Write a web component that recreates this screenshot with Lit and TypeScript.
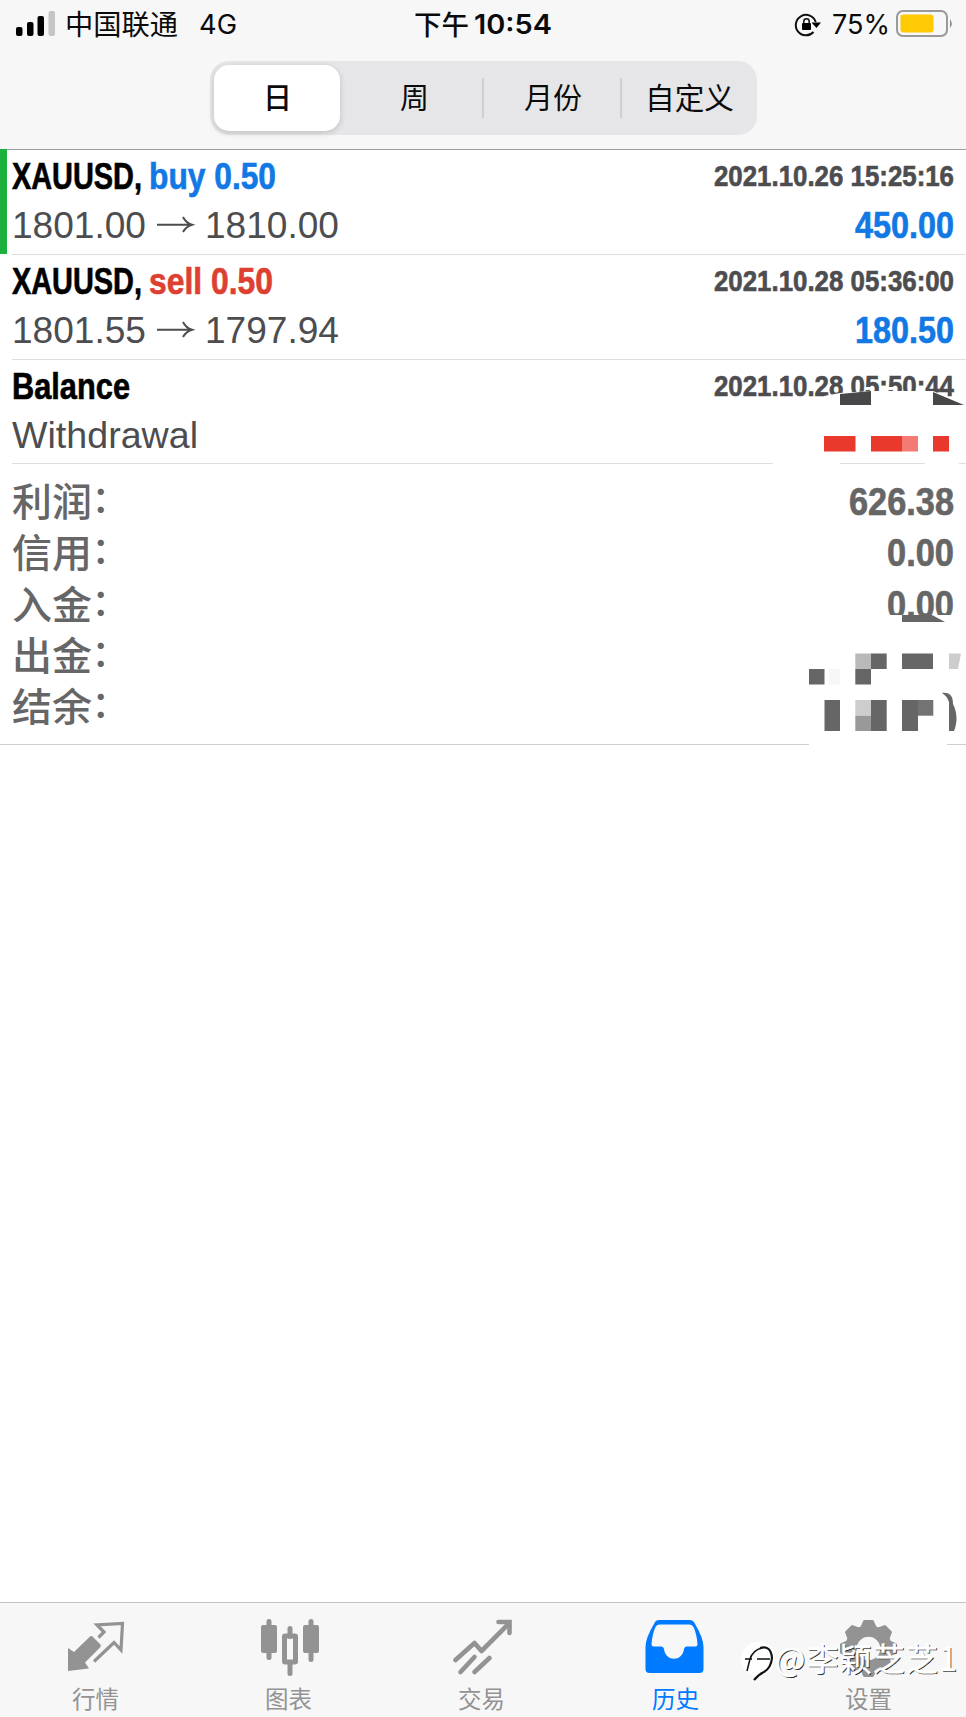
import { LitElement, html, svg, css } from "lit";
import { customElement } from "lit/decorators.js";

// Text line set to a fixed advance width; `tall` stretches the glyphs vertically.
const line = (
  text: string,
  cls: string,
  width: number,
  height: number,
  baseline: number,
  size: number,
  tall = 1
) => html`<svg class="line ${cls}" width=${width} height=${height}>
  <text x="0" y=${baseline / tall} transform="scale(1 ${tall})" font-size=${size / tall} textLength=${width} lengthAdjust="spacingAndGlyphs">${text}</text>
</svg>`;

const narrow = (text: string, cls: string, width: number, baseline: number, size: number) =>
  line(text, "bold " + cls, width, 50, baseline, size, 1.29);

const icons: Record<string, unknown> = {
  quotes: svg`<path d="M5 28 L11 32 L27 16.500 Q28.500 15.500 30 17 L37.500 24.500 Q38.500 26 37 27.500 L22 42.500 L26 48.500 L5 51Z" fill="currentColor"/>
    <path d="M35.500 17.500 L41 12 L34 5 L59.500 3.500 L58 30 L51 22.500 L31 41.500" fill="none" stroke="currentColor" stroke-width="3.200" stroke-linejoin="miter" stroke-linecap="butt"/>`,
  chart: svg`<g fill="currentColor"><rect x="5" y="5" width="16" height="28" rx="2"/><rect x="10.500" y="-1" width="5" height="41" rx="2.500"/>
    <rect x="47" y="5" width="16" height="28" rx="2"/><rect x="52.500" y="-1" width="5" height="43" rx="2.500"/>
    <rect x="31.500" y="6" width="5" height="13" rx="2.500"/><rect x="31.500" y="41" width="5" height="15" rx="2.500"/></g>
    <rect x="28.500" y="16" width="11" height="26" rx=".5" fill="none" stroke="currentColor" stroke-width="5"/>`,
  trade: svg`<g fill="none" stroke="currentColor" stroke-width="4.600" stroke-linecap="round" stroke-linejoin="round" transform="translate(-2.500 0)">
    <path d="M9 40 L28 23 L35 31 L62 4"/><path d="M52 2 H63 V13" stroke-linejoin="miter"/><path d="M28 37 L14 52 M43 38 L28 52"/></g>`,
  history: svg`<path transform="translate(-1.500 0)" fill-rule="evenodd" fill="currentColor" d="M15 0 H49 Q52.500 0 54 3 Q63 18 63 27 V49 Q63 53 59 53 H9 Q5 53 5 49 V27 Q5 18 14 3 Q15 0 19 0Z M19 4.500 Q16 4.500 15 7 Q12 13 11 24 Q11 26.500 13 26.500 H21 Q23 26.500 23.500 29 C25 42 42 42 43.500 29 Q44 26.500 46 26.500 H55 Q57 26.500 57 24 Q56 13 53 7 Q52 4.500 49 4.500Z"/>`,
  settings: svg`<g transform="translate(-.500 .500)"><g fill="none" stroke="currentColor" stroke-width="11.500"><circle cx="34" cy="28" r="17.500"/></g>
    <g fill="currentColor" stroke="currentColor" stroke-width="3" stroke-linejoin="round">
    ${[0, 45, 90, 135, 180, 225, 270, 315].map((a) => svg`<path transform="rotate(${a} 34 28)" d="M26.500 9 L30 1 H38 L41.500 9Z"/>`)}</g></g>`,
};

@customElement("app-root")
export class AppRoot extends LitElement {
  static styles = css`
    :host {
      display: flex;
      flex-direction: column;
      position: relative;
      width: 966px;
      height: 1717px;
      overflow: hidden;
      background: #fff;
      font-family: "Liberation Sans", "Noto Sans CJK SC", sans-serif;
    }
    svg { display: block; overflow: visible; flex: none; }
    .line { fill: currentColor; white-space: pre; }
    .ui { font-family: Inter, "Noto Sans CJK SC", sans-serif; color: #0b0b0b; }
    .cjk { font-family: "Noto Sans CJK SC", sans-serif; }
    .semi { font-weight: 600; }
    .med { font-weight: 500; }
    .bold { font-weight: 700; stroke: currentColor; stroke-width: .5px; }
    header { height: 149px; background: #f7f7f7; border-bottom: 1px solid #9d9d9d; flex: none; }
    .status { display: grid; grid-template-columns: 414px 1fr auto; height: 61px; }
    .left, .mid, .right { display: flex; }
    .left { padding-left: 16px; }
    .carrier { margin-left: 9px; }
    .net { margin-left: 21px; }
    .clock { margin-left: 5px; }
    .right { padding-right: 13px; }
    .pct { margin: 0 6px 0 12px; }
    .segments {
      display: grid; grid-template-columns: 130px 139px 138px 1fr; width: 547px; height: 74px;
      margin-left: 210px; border-radius: 19px; background: #e6e6e8;
    }
    .seg { display: flex; justify-content: center; align-items: flex-start; position: relative; padding-left: 9px; }
    .seg.on { margin: 4px 0 5px 4px; padding-left: 0; background: #fff; border-radius: 15px; box-shadow: 0 2px 6px rgba(0,0,0,.16); }
    .seg.on .line { margin-top: -4px; }
    .seg.rule::before { content: ""; position: absolute; left: 3px; top: 17px; width: 1.500px; height: 40px; background: #cfcfd2; }
    .seg.rule2 { padding-left: 4px; }
    .row { display: flex; height: 105px; flex: none; padding-left: 12px; position: relative; }
    .row.last { height: 104px; }
    .row.open::before { content: ""; position: absolute; left: 0; top: -1px; width: 7px; height: 105px; background: #1cb03c; }
    .cells { flex: 1; display: grid; grid-template-rows: 50px 1fr; border-bottom: 1px solid #dedede; padding-right: 12px; }
    .pair { display: flex; justify-content: space-between; }
    .name { display: flex; gap: 7px; }
    .black { color: #000; }
    .grey { color: #4d4d50; }
    .blue { color: #1178e4; }
    .red { color: #dd4031; }
    .sum { color: #666; }
    .summary { display: grid; grid-template-rows: repeat(4, 51.300px) 1fr; height: 266px; flex: none; padding: 14px 12px 0 12px; border-bottom: 1px solid #cfcfcf; }
    .mosaic { position: absolute; left: 0; top: 0; pointer-events: none; }
    main { flex: 1; }
    footer { display: grid; grid-template-columns: repeat(5, 1fr); height: 114px; background: #f7f7f7; border-top: 1px solid #c4c4c4; flex: none; }
    .tab { display: flex; flex-direction: column; align-items: center; padding-top: 17px; color: #939393; }
    .tab.on { color: #007aff; }
    .tab .line { margin: 7px 2px 0 0; }
    .mark { position: absolute; left: 735px; top: 1628px; }
  `;

  render() {
    return html`
      <header>
        <div class="status">
          <div class="left">
            <svg width="40" height="50">
              <rect x="0" y="27" width="6.500" height="9" rx="2"/><rect x="11" y="22" width="6.500" height="14" rx="2"/>
              <rect x="21.500" y="16" width="6.500" height="20" rx="2"/><rect x="32.500" y="11" width="6.500" height="25" rx="2" fill="#c5c5c5"/>
            </svg>
            ${line("中国联通", "ui cjk carrier", 113, 50, 34.5, 28)}
            ${line("4G", "ui net", 38, 50, 34.3, 27)}
          </div>
          <div class="mid">
            ${line("下午", "ui cjk med", 55, 50, 34.5, 27.5)}
            ${line("10:54", "ui semi clock", 78, 50, 34.3, 27)}
          </div>
          <div class="right">
            <svg width="26" height="50">
              <path d="M19.500 32 A10.200 10.200 0 1 1 21.700 22" fill="none" stroke="#111" stroke-width="2"/>
              <path d="M17.500 22.500 H27 L22.500 28Z"/><rect x="8" y="23" width="9" height="7" rx="1"/>
              <path d="M9.800 23 V21.500 A2.700 2.700 0 0 1 15.200 21.500 V23" fill="none" stroke="#111" stroke-width="1.500"/>
            </svg>
            ${line("75%", "ui pct", 58, 50, 34.3, 27)}
            <svg width="57" height="50">
              <rect x="1" y="11" width="50" height="25" rx="6" fill="none" stroke="#999" stroke-width="2"/>
              <rect x="4.500" y="14.500" width="33" height="18" rx="3" fill="#fdca04"/>
              <path d="M54 19 Q57.500 23.500 54 28Z" fill="#8a8a8a"/>
            </svg>
          </div>
        </div>
        <div class="segments">
          <div class="seg on">${line("日", "ui cjk med", 29, 70, 48, 29)}</div>
          <div class="seg">${line("周", "ui cjk", 29, 70, 48, 29)}</div>
          <div class="seg rule">${line("月份", "ui cjk", 58, 70, 48, 29)}</div>
          <div class="seg rule rule2">${line("自定义", "ui cjk", 89, 70, 48, 29.5)}</div>
        </div>
      </header>

      <section class="row open"><div class="cells">
        <div class="pair">
          <div class="name">${narrow("XAUUSD,", "black", 130, 39.3, 37)}${narrow("buy 0.50", "blue", 127, 39.3, 37)}</div>
          ${narrow("2021.10.26 15:25:16", "grey", 240, 35.7, 29.5)}
        </div>
        <div class="pair">${this.price("1801.00", "1810.00")}${narrow("450.00", "blue", 99, 38, 37)}</div>
      </div></section>
      <section class="row"><div class="cells">
        <div class="pair">
          <div class="name">${narrow("XAUUSD,", "black", 130, 39, 37)}${narrow("sell 0.50", "red", 124, 39, 37)}</div>
          ${narrow("2021.10.28 05:36:00", "grey", 240, 35.7, 29.5)}
        </div>
        <div class="pair">${this.price("1801.55", "1797.94")}${narrow("180.50", "blue", 99, 38, 37)}</div>
      </div></section>
      <section class="row last"><div class="cells">
        <div class="pair">
          ${narrow("Balance", "black", 118, 39, 37)}
          ${narrow("2021.10.28 05:50:44", "grey", 240, 35.7, 29.5)}
        </div>
        <div class="pair">${line("Withdrawal", "grey", 186, 50, 37.7, 37)}</div>
      </div></section>

      <section class="summary">
        ${[["利润", "626.38", 105], ["信用", "0.00", 67], ["入金", "0.00", 67], ["出金", "", 0], ["结余", "", 0]].map(
          ([label, value, w]) => html`<div class="pair">
            <svg class="line cjk med sum" width="100" height="50">
              <text x="0" y="38" font-size="39" textLength="80" lengthAdjust="spacingAndGlyphs">${label}</text>
              <text x="79.500" y="34.500" font-size="37">：</text>
            </svg>
            ${value ? narrow(value as string, "sum", w as number, 37.5, 38) : null}
          </div>`
        )}
      </section>

      <svg class="mosaic" width="966" height="760">
        <g fill="#fff">
          <path d="M824 396 L840 393 L871 391 H933 L966 405 V420 H824Z"/>
          <rect x="773" y="455" width="67" height="12"/><rect x="925" y="455" width="34" height="12"/>
          <path d="M886 615 H960 V640 H886Z"/><rect x="809" y="735" width="138" height="14"/>
        </g>
        <g fill="#48484b"><path d="M840 394 L871 391 V405 H840Z"/><path d="M933 392 L964 405 H933Z"/></g>
        <g fill="#e8392c"><rect x="824" y="436" width="31.500" height="15.500"/><rect x="871" y="436" width="31" height="15.500"/><rect x="933" y="436" width="16" height="15.500"/></g>
        <rect x="902" y="436" width="16" height="15.500" fill="#f37b73"/>
        <g fill="#666">
          <path d="M902 615 H932 L945 622 H902Z"/>
          <rect x="871" y="653.500" width="15.700" height="15.500"/><rect x="902" y="653.500" width="31" height="15.500"/>
          <rect x="809" y="669" width="15.500" height="15.500"/><rect x="855.300" y="669" width="15.700" height="15.500"/>
          <rect x="824.500" y="700" width="15.500" height="31"/><rect x="871" y="700" width="15.700" height="31"/>
          <path d="M902 700 H918 V731 H902Z"/>
          <path d="M942 693 C950 692 953 696 953 704 C957 712 958 722 954 731 H949 V702 Q947 696 942 693Z"/>
        </g>
        <rect x="855.300" y="653.500" width="15.700" height="15.500" fill="#b9b9b9"/>
        <path d="M949 653.500 H961 L958 669 H949Z" fill="#cdcdcd"/>
        <rect x="829" y="669" width="11" height="15.500" fill="#f7f7f7"/>
        <rect x="855.300" y="700" width="15.700" height="15.700" fill="#cdcdcd"/>
        <rect x="855.300" y="715.700" width="15.700" height="15.300" fill="#999"/>
        <rect x="918" y="700" width="15.300" height="15.700" fill="#737373"/>
      </svg>

      <main></main>

      <footer>
        ${[["quotes", "行情"], ["chart", "图表"], ["trade", "交易"], ["history", "历史"], ["settings", "设置"]].map(
          ([id, label]) => html`<div class="tab ${id === "history" ? "on" : ""}">
            <svg width="68" height="56">${icons[id]}</svg>
            ${line(label, "cjk", 47, 32, 24.5, 23.5)}
          </div>`
        )}
      </footer>

      <svg class="mark" width="231" height="80">
        <circle cx="23" cy="31" r="17" fill="#fff"/>
        <path d="M25 20 Q36 17 37 30 Q36 40 29 44 Q24 46 19 52" fill="none" stroke="#111" stroke-width="2.200"/>
        <path d="M12 43 L15 31 Q18 22 27 20 M10 31 H17 M22 31 H35" fill="none" stroke="#111" stroke-width="1.500"/>
        <g class="cjk" font-size="32">
          <text x="41" y="43.500" fill="#222" textLength="182">@李颖芝芝1</text>
          <text x="40" y="42.500" fill="#fff" stroke="#fff" stroke-width=".5" textLength="182">@李颖芝芝1</text>
        </g>
      </svg>
    `;
  }

  private price(from: string, to: string) {
    return html`<svg class="line grey" width="330" height="50">
      <text x="0" y="38" font-size="36.500" textLength="134" lengthAdjust="spacingAndGlyphs">${from}</text>
      <path d="M145 24.700 H179 M171 17 Q174 23 180 24.700 Q174 26.500 171 32" fill="none" stroke="currentColor" stroke-width="2"/>
      <text x="193" y="38" font-size="36.500" textLength="134" lengthAdjust="spacingAndGlyphs">${to}</text>
    </svg>`;
  }
}
